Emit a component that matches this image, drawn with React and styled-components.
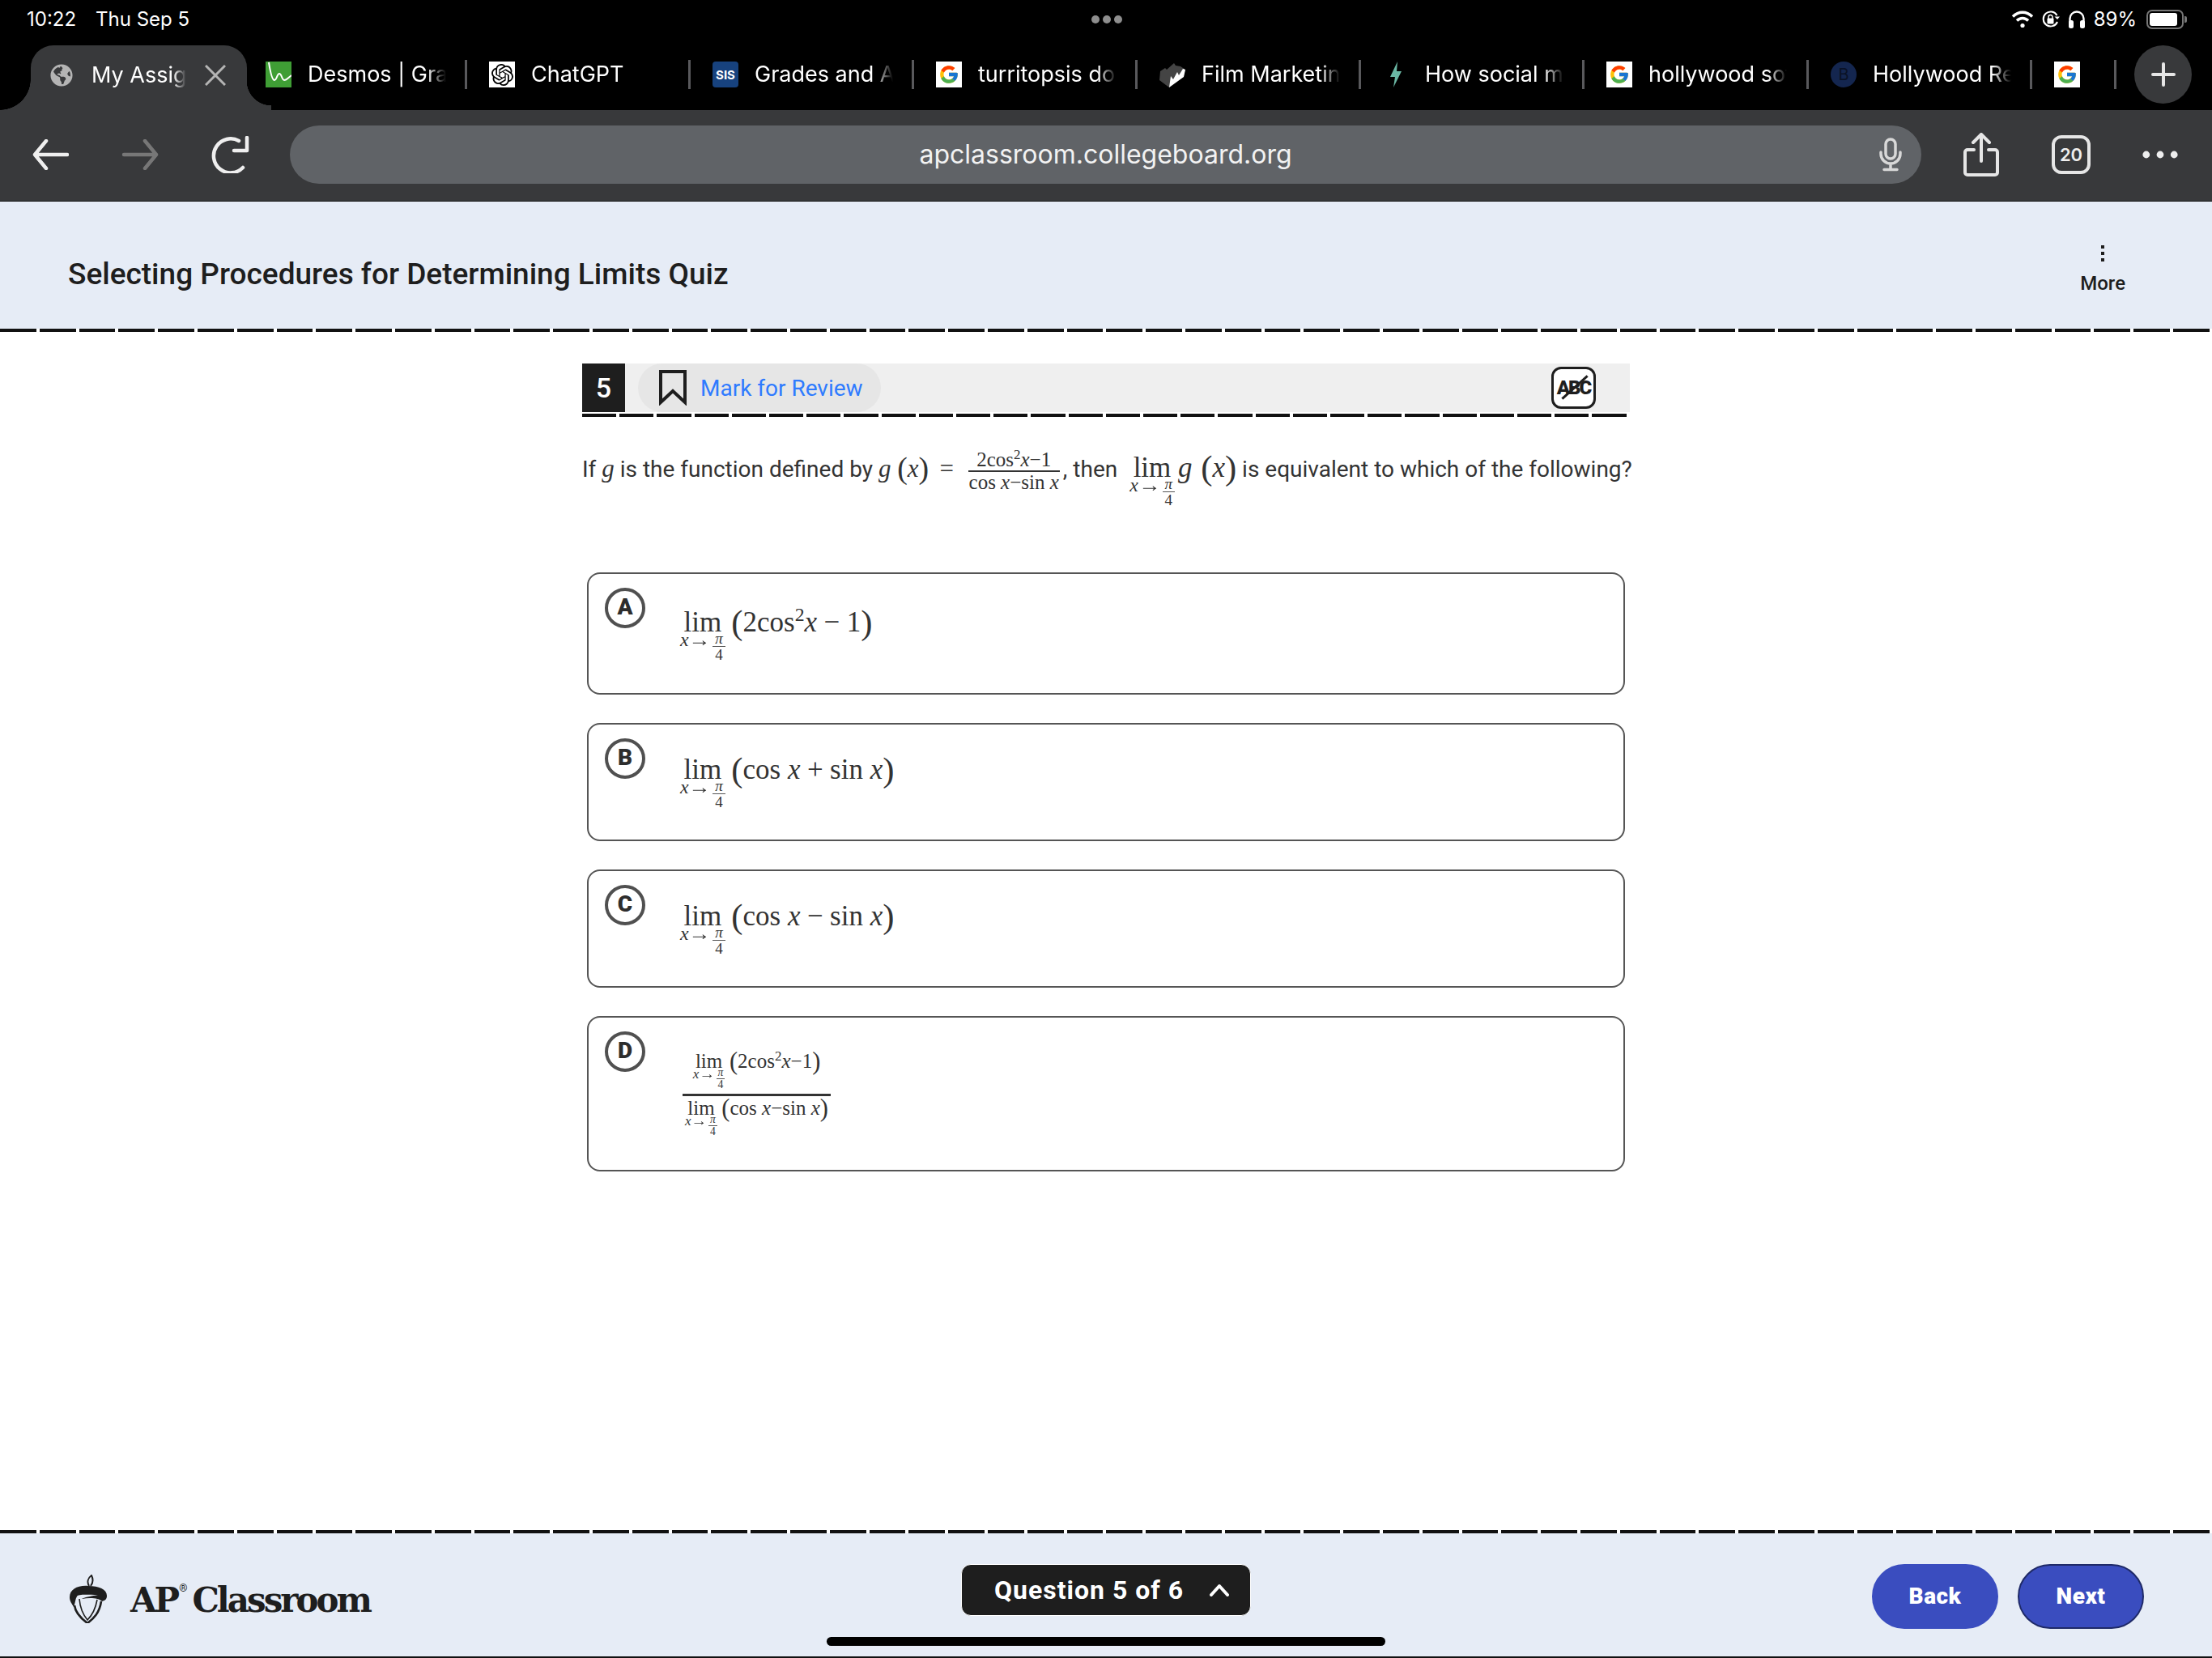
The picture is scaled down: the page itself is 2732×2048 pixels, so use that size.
import styled, { createGlobalStyle } from 'styled-components';
import { SiOpenai } from 'react-icons/si';
import { FcGoogle } from 'react-icons/fc';
import { FaGlobeAmericas } from 'react-icons/fa';

const Global = createGlobalStyle`
  * { box-sizing: border-box; }
  html, body { margin: 0; padding: 0; background: #fff; }
`;

const Page = styled.div`
  width: 2732px;
  height: 2048px;
  display: flex;
  flex-direction: column;
  overflow: hidden;
  font-family: Roboto, "Liberation Sans", sans-serif;
`;

/* ---------- ipad status bar + tabs ---------- */
const StatusBar = styled.div`
  height: 56px;
  background: #000;
  color: #fff;
  display: grid;
  grid-template-columns: 1fr auto 1fr;
  align-items: flex-start;
  padding: 8px 32px 0 33px;
  font: 400 24px/32px Inter, sans-serif;
`;
const Clock = styled.div`
  display: flex;
  gap: 24px;
`;
const DotsTop = styled.div`
  display: flex;
  gap: 4px;
  padding-top: 11px;
  span {
    width: 10px;
    height: 10px;
    border-radius: 50%;
    background: #8e8e8e;
  }
`;
const StatusRight = styled.div`
  display: flex;
  justify-content: flex-end;
  align-items: center;
  gap: 10px;
  padding-right: 3px;
`;
const Battery = styled.div`
  width: 46px;
  height: 24px;
  border: 2px solid #777;
  border-radius: 7px;
  padding: 2px;
  margin-left: 2px;
  position: relative;
  &::before {
    content: '';
    display: block;
    height: 100%;
    width: 89%;
    background: #fff;
    border-radius: 3px;
  }
  &::after {
    content: '';
    position: absolute;
    right: -6px;
    top: 6px;
    width: 3px;
    height: 8px;
    background: #777;
    border-radius: 0 2px 2px 0;
  }
`;

const TabStrip = styled.div`
  height: 80px;
  background: #000;
  display: flex;
  align-items: flex-start;
  padding-left: 38px;
  color: #fff;
  font: 400 27px/32px Inter, sans-serif;
`;
const ActiveTab = styled.div`
  width: 267px;
  margin-right: -4px;
  height: 80px;
  background: #38393b;
  border-radius: 28px 28px 0 0;
  position: relative;
  display: flex;
  align-items: flex-start;
  padding: 21px 24px 0 24px;
  gap: 23px;
  z-index: 1;
  &::before, &::after {
    content: '';
    position: absolute;
    bottom: 0;
  }
  &::before {
    left: -38px;
    width: 38px;
    height: 38px;
    background: radial-gradient(circle at 0 0, transparent 37.5px, #38393b 38px);
  }
  &::after {
    right: -30px;
    width: 30px;
    height: 36px;
    background: radial-gradient(circle at 100% 0, transparent 30px, #38393b 30.5px);
  }
`;
const Tab = styled.div`
  width: ${p => p.$width || 276}px;
  height: 36px;
  margin-top: 18px;
  padding-left: 27px;
  display: flex;
  align-items: center;
  border-right: 3px solid #59595c;
  flex: none;
`;
const Favicon = styled.div`
  width: 32px;
  height: 32px;
  flex: none;
  display: flex;
  align-items: center;
  justify-content: center;
  background: ${p => p.$bg || 'transparent'};
  color: ${p => p.$color || '#000'};
  border-radius: ${p => p.$radius || 0}px;
  font: ${p => p.$weight || 700} ${p => p.$size || 15}px/1 Inter, sans-serif;
`;
const TabTitle = styled.div`
  width: ${p => p.$width || 171}px;
  margin-left: ${p => p.$gap ?? 20}px;
  white-space: nowrap;
  overflow: hidden;
  mask-image: linear-gradient(90deg, #000 86%, transparent 100%);
`;
const PlusButton = styled.div`
  width: 71px;
  height: 72px;
  margin: 0 0 0 22px;
  border-radius: 50%;
  background: #38393b;
  display: flex;
  align-items: center;
  justify-content: center;
`;

/* ---------- address bar ---------- */
const Toolbar = styled.div`
  height: 113px;
  background: #38393b;
  border-bottom: 1px solid #111;
  display: flex;
  align-items: center;
  padding: 0 42px 2px 40px;
`;
const NavIcon = styled.svg`
  flex: none;
  margin-right: ${p => p.$mr || 0}px;
  margin-left: ${p => p.$ml || 0}px;
`;
const UrlBar = styled.div`
  flex: none;
  width: 2015px;
  height: 72px;
  border-radius: 36px;
  background: #606367;
  display: flex;
  align-items: center;
  justify-content: center;
  position: relative;
  color: #f2f2f2;
  font: 400 32px/38px Inter, sans-serif;
  svg {
    position: absolute;
    right: 24px;
    top: 15px;
  }
`;
const TabCount = styled.div`
  width: 48px;
  height: 48px;
  flex: none;
  margin: 0 64px 0 65px;
  border: 4px solid #e6e6e6;
  border-radius: 12px;
  color: #eee;
  font: 600 22px/40px Inter, sans-serif;
  text-align: center;
`;

/* ---------- quiz header ---------- */
const QuizHeader = styled.header`
  height: 157px;
  background: #e6ecf6;
  display: flex;
  justify-content: space-between;
  align-items: center;
  padding: 12px 107px 0 84px;
  color: #1e1e1e;
`;
const QuizTitle = styled.h1`
  margin: 10px 0 0;
  font: 500 37px/48px Roboto, sans-serif;
`;
const MoreMenu = styled.div`
  display: flex;
  flex-direction: column;
  align-items: center;
  gap: 12px;
  font: 500 24px/30px Roboto, sans-serif;
`;
const Kebab = styled.div`
  display: flex;
  flex-direction: column;
  gap: 4px;
  span {
    width: 4px;
    height: 4px;
    background: #1e1e1e;
  }
`;
const DashedRule = styled.div`
  height: 4px;
  flex: none;
  background: repeating-linear-gradient(
    90deg,
    #111 0 ${p => p.$dash}px,
    transparent ${p => p.$dash}px ${p => p.$dash + 4}px
  );
`;

/* ---------- question ---------- */
const Main = styled.main`
  flex: 1;
  display: flex;
  flex-direction: column;
  align-items: center;
  padding-top: 39px;
  background: #fff;
`;
const QuestionColumn = styled.div`
  width: 1294px;
`;
const QuestionBar = styled.div`
  height: 60px;
  background: #efefef;
  display: flex;
  align-items: center;
  margin-bottom: 2px;
`;
const NumberBox = styled.div`
  width: 53px;
  height: 60px;
  background: #1e1e1e;
  color: #fff;
  font: 500 34px/60px Roboto, sans-serif;
  text-align: center;
`;
const MarkPill = styled.div`
  width: 300px;
  height: 60px;
  margin-left: 16px;
  padding-left: 26px;
  border-radius: 30px;
  background: #e6e6e6;
  display: flex;
  align-items: center;
  gap: 17px;
  color: #2f7bff;
  font: 400 28px/36px Roboto, sans-serif;
  span {
    padding-top: 2px;
  }
`;
const AbcButton = styled.div`
  width: 55px;
  height: 52px;
  margin-left: auto;
  margin-right: 42px;
  border: 3px solid #1e1e1e;
  border-radius: 12px;
  background: #fff;
  color: #1e1e1e;
  font: 900 24px/46px Roboto, sans-serif;
  letter-spacing: -2px;
  text-align: center;
  position: relative;
  &::after {
    content: '';
    position: absolute;
    left: 5px;
    top: 21px;
    width: 42px;
    height: 3px;
    background: #1e1e1e;
    transform: rotate(-42deg);
  }
`;
const Prompt = styled.div`
  margin-top: 40px;
  height: 152px;
  white-space: nowrap;
  color: #333;
  font: 400 28px/36px Roboto, sans-serif;
`;

const MathFont = styled.span`
  font-family: "Liberation Serif", "Times New Roman", serif;
  font-size: ${p => p.$size}px;
  color: #333;
  line-height: 1;
`;
const Var = styled.i`
  font-family: "Liberation Serif", serif;
`;
const Op = styled.span`
  margin: 0 ${p => p.$space ?? 0.24}em;
  font-weight: 300;
`;
const Paren = styled.span`
  font-size: 1.22em;
  font-weight: 400;
  line-height: 0.8;
  vertical-align: -0.06em;
`;
const Sup = styled.sup`
  font-size: 0.68em;
  vertical-align: 0.55em;
  line-height: 0;
`;
const LimBlock = styled.span`
  display: inline-flex;
  flex-direction: column;
  align-items: center;
  vertical-align: baseline;
  line-height: 1;
  margin-right: ${p => p.$mr ?? 0.22}em;
`;
const Under = styled.span`
  display: inline-flex;
  align-items: flex-start;
  font-size: 0.68em;
  line-height: 1;
  margin-top: -0.3em;
  white-space: nowrap;
`;
const Arrow = styled.span`
  display: inline-block;
  transform: scaleX(1.15);
  margin: 0 0.08em;
`;
const MiniFrac = styled.span`
  display: inline-flex;
  flex-direction: column;
  align-items: center;
  font-size: 0.8em;
  line-height: 1;
  margin-left: 0.12em;
  span:first-child {
    border-bottom: 1px solid #555;
    padding: 0 0.15em;
  }
`;
const InlineFrac = styled.span`
  display: inline-flex;
  flex-direction: column;
  align-items: center;
  vertical-align: middle;
  margin: 0 4px 0 12px;
  line-height: 1.05;
  font-size: 25px;
`;
const FracTop = styled.span`
  display: block;
  width: 100%;
  text-align: center;
  border-bottom: 2px solid #333;
  white-space: nowrap;
`;
const FracBottom = styled.span`
  display: block;
  white-space: nowrap;
  padding: 0 1px;
`;
const ThenGap = styled.span`
  margin-right: 8px;
`;

const Lim = ({ mr }) => (
  <LimBlock $mr={mr}>
    lim
    <Under>
      <i>x</i><Arrow>→</Arrow>
      <MiniFrac>
        <span><i>π</i></span>
        <span>4</span>
      </MiniFrac>
    </Under>
  </LimBlock>
);

const ChoiceList = styled.div`
  padding: 0 6px;
  display: flex;
  flex-direction: column;
  gap: 35px;
`;
const Choice = styled.div`
  height: ${p => p.$height}px;
  border: 2px solid #555;
  border-radius: 16px;
  padding: 17px 20px;
  display: flex;
  gap: 43px;
`;
const ChoiceLetter = styled.div`
  width: 50px;
  height: 50px;
  flex: none;
  border: 4px solid #505050;
  border-radius: 50%;
  color: #2d2d2d;
  font: 900 28px/40px Roboto, sans-serif;
  text-align: center;
`;
const ChoiceMath = styled.div`
  padding-top: ${p => p.$top}px;
  white-space: nowrap;
`;
const StackFrac = styled.div`
  display: inline-flex;
  flex-direction: column;
  align-items: center;
  margin-left: 3px;
`;
const StackTop = styled.div`
  width: 183px;
  text-align: center;
  border-bottom: 3px solid #333;
  height: 56px;
`;
const StackBottom = styled.div`
  text-align: center;
  padding-top: 2px;
`;

/* ---------- footer ---------- */
const Footer = styled.footer`
  height: 154px;
  background: #e6ecf6;
  border-bottom: 2px solid #111;
  display: grid;
  grid-template-columns: 1fr auto 1fr;
  align-items: flex-start;
  padding: 38px 84px 0;
  position: relative;
`;
const Logo = styled.div`
  display: flex;
  align-items: center;
  gap: 27px;
  margin-top: 10px;
`;
const LogoText = styled.div`
  color: #1e1e1e;
  font: 700 42px/60px "DejaVu Serif", serif;
  letter-spacing: -3px;
  white-space: nowrap;
  padding-top: 5px;
  sup {
    font: 400 13px/0 Roboto, sans-serif;
    vertical-align: 1.9em;
    letter-spacing: 0;
    margin: 0 6px 0 2px;
  }
`;
const QuestionButton = styled.div`
  width: 358px;
  height: 64px;
  background: #1e1e1e;
  border: 1px solid #fff;
  border-radius: 12px;
  color: #fff;
  display: flex;
  align-items: center;
  justify-content: center;
  gap: 32px;
  padding-left: 14px;
  font: 700 32px/40px Roboto, sans-serif;
  letter-spacing: 1px;
`;
const FooterButtons = styled.div`
  display: flex;
  justify-content: flex-end;
  gap: 24px;
`;
const PillButton = styled.div`
  width: 156px;
  height: 80px;
  border-radius: 40px;
  background: #3a4dbf;
  border: 2px solid ${p => (p.$focus ? '#1f2a68' : '#3a4dbf')};
  color: #fff;
  font: 900 28px/76px Roboto, sans-serif;
  text-align: center;
  letter-spacing: 0.5px;
`;
const HomeBar = styled.div`
  position: absolute;
  left: 1021px;
  bottom: 13px;
  width: 690px;
  height: 11px;
  border-radius: 6px;
  background: #000;
`;

const DesmosIcon = () => (
  <svg width="32" height="32" viewBox="0 0 32 32">
    <rect width="32" height="32" fill="#3f9e35" />
    <path d="M4 1 C6 14 8 23 11 23 C14 23 14 15 17 15 C20 15 20 23 23 23 C26 23 28 20 32 17" fill="none" stroke="#fff" strokeWidth="2" />
  </svg>
);
const GoogleIcon = () => (
  <Favicon $bg="#fff">
    <FcGoogle size={26} />
  </Favicon>
);

export default function App() {
  return (
    <Page>
      <Global />
      <StatusBar>
        <Clock><span>10:22</span><span>Thu Sep 5</span></Clock>
        <DotsTop><span /><span /><span /></DotsTop>
        <StatusRight>
          <svg width="28" height="24" viewBox="0 0 28 24" fill="none" stroke="#fff" strokeWidth="3.4">
            <path d="M2 8.5 C9 1.5 19 1.5 26 8.5" />
            <path d="M7 13.5 C11 9.5 17 9.5 21 13.5" />
            <circle cx="14" cy="19.5" r="2.6" fill="#fff" stroke="none" />
          </svg>
          <svg width="22" height="24" viewBox="0 0 22 24" fill="none" stroke="#fff" strokeWidth="2">
            <path d="M18.5 7 A9 9 0 1 0 19 15" />
            <path d="M15.5 8.5 L19 12 L22 8.5 Z" fill="#fff" stroke="none" />
            <rect x="6.5" y="10.5" width="8" height="7" rx="1" fill="#fff" stroke="none" />
            <path d="M8 11 V9 a2.5 2.5 0 0 1 5 0 V11" strokeWidth="1.5" />
          </svg>
          <svg width="22" height="24" viewBox="0 0 22 24" fill="none" stroke="#fff" strokeWidth="2.4">
            <path d="M2.5 17 V11 a8.5 8.5 0 0 1 17 0 V17" />
            <rect x="1" y="13" width="6" height="10" rx="2.5" fill="#fff" stroke="none" />
            <rect x="15" y="13" width="6" height="10" rx="2.5" fill="#fff" stroke="none" />
          </svg>
          <span>89%</span>
          <Battery />
        </StatusRight>
      </StatusBar>

      <TabStrip>
        <ActiveTab>
          <FaGlobeAmericas size={28} color="#b4b4b4" style={{ marginTop: 2, flex: 'none' }} />
          <TabTitle $width={117} $gap={0}>My Assignments</TabTitle>
          <svg width="26" height="26" viewBox="0 0 26 26" stroke="#b4b4b4" strokeWidth="3" style={{ marginTop: 3, flex: 'none' }}>
            <path d="M1 1 L25 25 M25 1 L1 25" />
          </svg>
        </ActiveTab>
        <Tab>
          <Favicon><DesmosIcon /></Favicon>
          <TabTitle>Desmos | Graphing</TabTitle>
        </Tab>
        <Tab>
          <Favicon $bg="#fff"><SiOpenai size={27} /></Favicon>
          <TabTitle>ChatGPT</TabTitle>
        </Tab>
        <Tab>
          <Favicon $bg="#17427e" $color="#fff" $radius={4}>SIS</Favicon>
          <TabTitle>Grades and Attendance</TabTitle>
        </Tab>
        <Tab>
          <GoogleIcon />
          <TabTitle>turritopsis dohrnii</TabTitle>
        </Tab>
        <Tab>
          <Favicon>
            <svg width="32" height="32" viewBox="0 0 32 32">
              <path d="M1 12 L7 8 L9 10 L18 2 L20 5 L26 6 L32 10 L30 18 L12 32 L0 23 Z" fill="#444" />
              <path d="M12 32 L14 18 L17 22 L22 13 L24 17 L29 9 L32 10 L30 19 Z" fill="#fff" />
            </svg>
          </Favicon>
          <TabTitle>Film Marketing</TabTitle>
        </Tab>
        <Tab>
          <Favicon>
            <svg width="18" height="32" viewBox="0 0 18 32">
              <path d="M11 0 L2 19 L8 19 L6 32 L16 12 L10 12 Z" fill="#6bb8a5" />
            </svg>
          </Favicon>
          <TabTitle>How social media</TabTitle>
        </Tab>
        <Tab $width={277}>
          <GoogleIcon />
          <TabTitle>hollywood software</TabTitle>
        </Tab>
        <Tab>
          <Favicon $bg="#14264f" $color="#0a1226" $radius={16} $size={20} $weight={400}>B</Favicon>
          <TabTitle>Hollywood Reporter</TabTitle>
        </Tab>
        <Tab $width={104}>
          <GoogleIcon />
        </Tab>
        <PlusButton>
          <svg width="30" height="30" viewBox="0 0 30 30" stroke="#e6e6e6" strokeWidth="4" strokeLinecap="round">
            <path d="M15 2 V28 M2 15 H28" />
          </svg>
        </PlusButton>
      </TabStrip>

      <Toolbar>
        <NavIcon $mr={65} width="45" height="38" viewBox="0 0 45 38" fill="none" stroke="#efefef" strokeWidth="4.5" strokeLinecap="round" strokeLinejoin="round">
          <path d="M43 19 H3 M17 2 L3 19 L17 36" />
        </NavIcon>
        <NavIcon $mr={64} width="46" height="38" viewBox="0 0 46 38" fill="none" stroke="#777" strokeWidth="4.5" strokeLinecap="round" strokeLinejoin="round">
          <path d="M3 19 H43 M29 2 L43 19 L29 36" />
        </NavIcon>
        <NavIcon $mr={50} width="48" height="46" viewBox="0 0 48 46" fill="none" stroke="#efefef" strokeWidth="4.5" strokeLinecap="round" strokeLinejoin="round">
          <path d="M40 39 A21 21 0 1 1 35 6" />
          <path d="M45 2 V18 H29" />
        </NavIcon>
        <UrlBar>
          apclassroom.collegeboard.org
          <svg width="28" height="42" viewBox="0 0 28 42" fill="none" stroke="#d8d8d8" strokeWidth="3.5" strokeLinecap="round">
            <rect x="8" y="2" width="12" height="24" rx="6" />
            <path d="M2 18 V20 a12 12 0 0 0 24 0 V18 M14 32 V39 M6 39.5 H22" />
          </svg>
        </UrlBar>
        <NavIcon $ml={52} width="44" height="54" viewBox="0 0 44 54" fill="none" stroke="#e6e6e6" strokeWidth="4" strokeLinecap="round" strokeLinejoin="round">
          <path d="M13 21 H5 a3 3 0 0 0 -3 3 V49 a3 3 0 0 0 3 3 H39 a3 3 0 0 0 3 -3 V24 a3 3 0 0 0 -3 -3 H31" />
          <path d="M22 35 V3 M12 12 L22 2 L32 12" />
        </NavIcon>
        <TabCount>20</TabCount>
        <svg width="46" height="12" viewBox="0 0 46 12" fill="#eee">
          <circle cx="5" cy="6" r="4.6" /><circle cx="23" cy="6" r="4.6" /><circle cx="41" cy="6" r="4.6" />
        </svg>
      </Toolbar>

      <QuizHeader>
        <QuizTitle>Selecting Procedures for Determining Limits Quiz</QuizTitle>
        <MoreMenu>
          <Kebab><span /><span /><span /></Kebab>
          More
        </MoreMenu>
      </QuizHeader>
      <DashedRule $dash={44.8} />

      <Main>
        <QuestionColumn>
          <QuestionBar>
            <NumberBox>5</NumberBox>
            <MarkPill>
              <svg width="34" height="44" viewBox="0 0 34 44" fill="none" stroke="#1e1e1e" strokeWidth="4">
                <path d="M2 2 H32 V40 L17 26 L2 40 Z" />
              </svg>
              <span>Mark for Review</span>
            </MarkPill>
            <AbcButton>ABC</AbcButton>
          </QuestionBar>
          <DashedRule $dash={42.2} />
          <Prompt>
            If <MathFont $size={31}><Var>g</Var></MathFont> is the function defined by{' '}
            <MathFont $size={31}>
              <Var>g</Var> <Paren>(</Paren><Var>x</Var><Paren>)</Paren> <Op $space={0.18}>=</Op>
              <InlineFrac>
                <FracTop>2cos<Sup>2</Sup><Var>x</Var>−1</FracTop>
                <FracBottom>cos <Var>x</Var>−sin <Var>x</Var></FracBottom>
              </InlineFrac>
            </MathFont>
            <ThenGap>, then</ThenGap>{' '}
            <MathFont $size={35}>
              <Lim mr={0.12} />
              <Var>g</Var><Paren> (</Paren><Var>x</Var><Paren>)</Paren>
            </MathFont>{' '}
            is equivalent to which of the following?
          </Prompt>

          <ChoiceList>
            <Choice $height={151}>
              <ChoiceLetter>A</ChoiceLetter>
              <ChoiceMath $top={25}>
                <MathFont $size={35}>
                  <Lim />
                  <Paren>(</Paren>2cos<Sup>2</Sup><Var>x</Var><Op>−</Op>1<Paren>)</Paren>
                </MathFont>
              </ChoiceMath>
            </Choice>
            <Choice $height={146}>
              <ChoiceLetter>B</ChoiceLetter>
              <ChoiceMath $top={21}>
                <MathFont $size={35}>
                  <Lim />
                  <Paren>(</Paren>cos <Var>x</Var><Op>+</Op>sin <Var>x</Var><Paren>)</Paren>
                </MathFont>
              </ChoiceMath>
            </Choice>
            <Choice $height={146}>
              <ChoiceLetter>C</ChoiceLetter>
              <ChoiceMath $top={21}>
                <MathFont $size={35}>
                  <Lim />
                  <Paren>(</Paren>cos <Var>x</Var><Op>−</Op>sin <Var>x</Var><Paren>)</Paren>
                </MathFont>
              </ChoiceMath>
            </Choice>
            <Choice $height={192}>
              <ChoiceLetter>D</ChoiceLetter>
              <ChoiceMath $top={24}>
                <MathFont $size={25}>
                  <StackFrac>
                    <StackTop>
                      <Lim mr={0.22} />
                      <Paren>(</Paren>2cos<Sup>2</Sup><Var>x</Var>−1<Paren>)</Paren>
                    </StackTop>
                    <StackBottom>
                      <Lim mr={0.22} />
                      <Paren>(</Paren>cos <Var>x</Var>−sin <Var>x</Var><Paren>)</Paren>
                    </StackBottom>
                  </StackFrac>
                </MathFont>
              </ChoiceMath>
            </Choice>
          </ChoiceList>
        </QuestionColumn>
      </Main>

      <DashedRule $dash={44.8} />
      <Footer>
        <Logo>
          <svg width="50" height="60" viewBox="0 0 50 60" fill="none" stroke="#1e1e1e">
            <path d="M26 14 C23 9 25 4 29 1 C31 5 31 10 28 14" strokeWidth="2" />
            <path d="M25 14 C12 13 2 18 2 28 C2 33 5 36 7 40 C9 35 9 30 11 27 C13 24 22 25 37 25 C27 27 20 28 17 30 C28 28 38 29 42 33 C46 32 48 30 48 26 C48 18 38 14 25 14 Z" fill="#1e1e1e" stroke="none" />
            <path d="M8 38 C9 47 16 54 24 60 C32 54 39 47 41 33" strokeWidth="2.6" />
            <path d="M14 30 C15 42 19 50 24 56 C30 50 34 42 36 31" strokeWidth="1.6" />
          </svg>
          <LogoText>AP<sup>®</sup>Classroom</LogoText>
        </Logo>
        <QuestionButton>
          Question 5 of 6
          <svg width="24" height="16" viewBox="0 0 24 16" fill="none" stroke="#fff" strokeWidth="4" strokeLinecap="round" strokeLinejoin="round">
            <path d="M2 14 L12 3 L22 14" />
          </svg>
        </QuestionButton>
        <FooterButtons>
          <PillButton>Back</PillButton>
          <PillButton $focus>Next</PillButton>
        </FooterButtons>
        <HomeBar />
      </Footer>
    </Page>
  );
}
